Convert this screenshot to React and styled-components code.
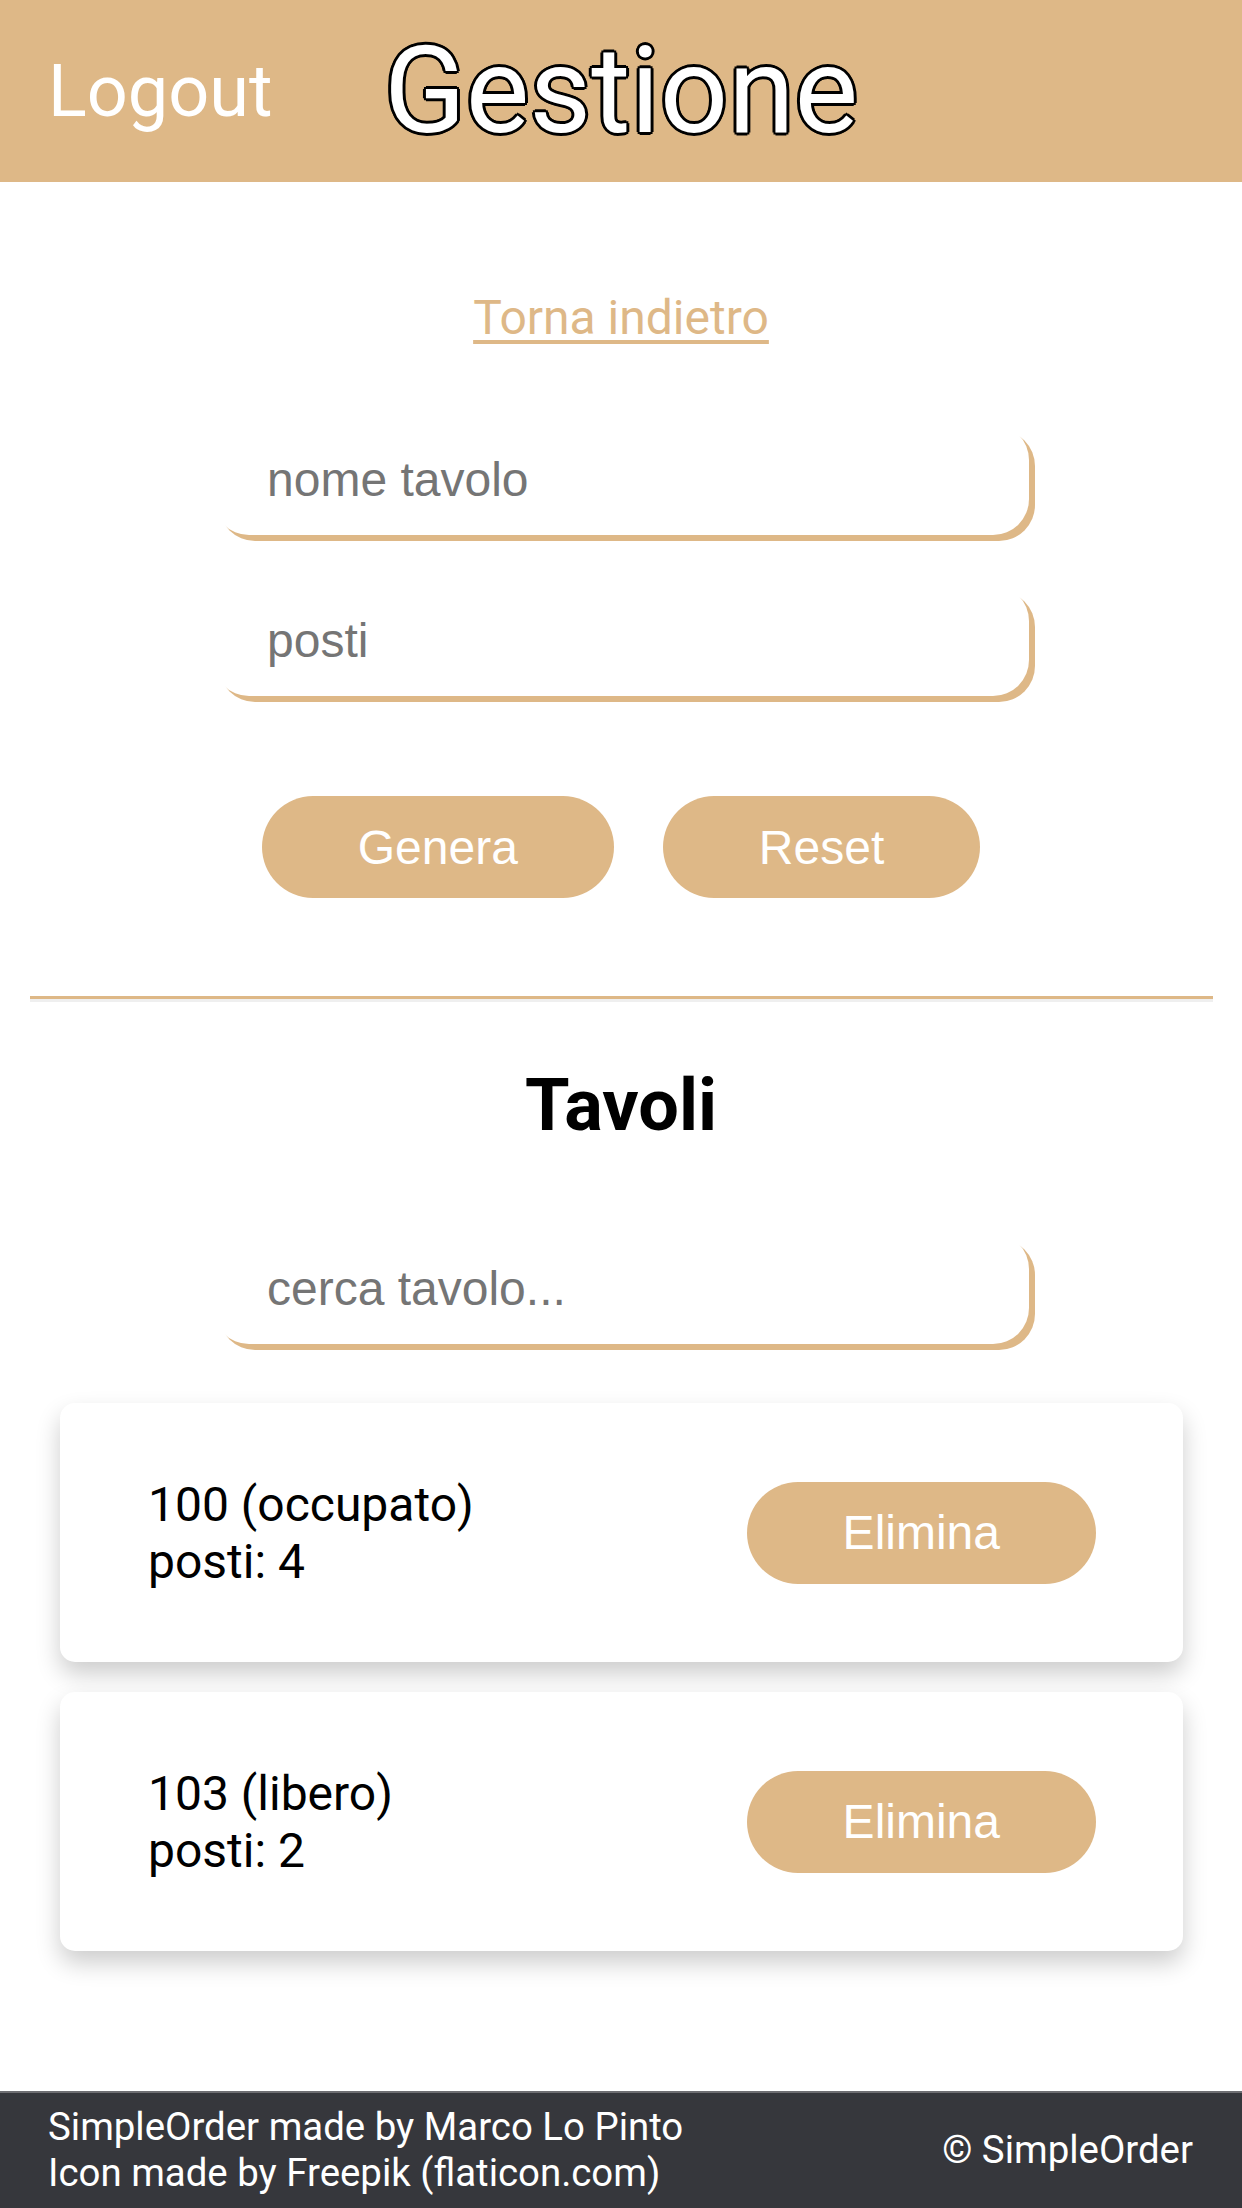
import React from "react";
import styled, { createGlobalStyle } from "styled-components";

const GlobalStyle = createGlobalStyle`
  html, body {
    margin: 0;
    padding: 0;
    background: #ffffff;
    font-family: Roboto, "Liberation Sans", Arial, sans-serif;
  }
  * {
    box-sizing: border-box;
  }
`;

const tables = [
  { id: 100, state: "occupato", seats: 4 },
  { id: 103, state: "libero", seats: 2 },
];

function App() {
  return (
    <>
      <GlobalStyle />
      <Page>
        <Header>
          <Logout>Logout</Logout>
          <Title>Gestione</Title>
          <span />
        </Header>

        <Main>
          <BackLink href="#">Torna indietro</BackLink>

          <Form>
            <Input placeholder="nome tavolo" />
            <Input placeholder="posti" $top={50} />
            <ButtonRow>
              <Button type="button">Genera</Button>
              <Button type="button">Reset</Button>
            </ButtonRow>
          </Form>

          <Divider />

          <Heading>Tavoli</Heading>

          <Input placeholder="cerca tavolo..." $top={85} />

          <List>
            {tables.map((t) => (
              <Card key={t.id}>
                <CardText>
                  {t.id} ({t.state})
                  <br />
                  posti: {t.seats}
                </CardText>
                <Button type="button">Elimina</Button>
              </Card>
            ))}
          </List>
        </Main>

        <Footer>
          <FooterText>
            SimpleOrder made by Marco Lo Pinto
            <br />
            Icon made by Freepik (flaticon.com)
          </FooterText>
          <FooterText>© SimpleOrder</FooterText>
        </Footer>
      </Page>
    </>
  );
}

export default App;

const Page = styled.div`
  min-height: 100vh;
  display: flex;
  flex-direction: column;
`;

const Header = styled.header`
  height: 182px;
  background: #deb887;
  display: grid;
  grid-template-columns: 1fr auto 1fr;
  align-items: center;
  padding: 0 48px;
`;

const Logout = styled.a`
  color: #ffffff;
  font-size: 72px;
  line-height: normal;
`;

const Title = styled.h1`
  margin: 0;
  color: #ffffff;
  font-size: 120px;
  font-weight: 400;
  line-height: normal;
  text-shadow: -3px 0 #000, 3px 0 #000, 0 -3px #000, 0 3px #000,
    -2px -2px #000, 2px -2px #000, -2px 2px #000, 2px 2px #000;
`;

const Main = styled.main`
  display: flex;
  flex-direction: column;
  align-items: center;
  padding-top: 108px;
  padding-bottom: 60px;
`;

const BackLink = styled.a`
  color: #deb887;
  font-size: 48px;
  line-height: 56px;
  text-decoration: underline;
  text-underline-offset: 6px;
`;

const Form = styled.form`
  display: flex;
  flex-direction: column;
  align-items: center;
  width: 100%;
  margin-top: 78px;
`;

const Input = styled.input`
  width: 816px;
  height: 111px;
  margin-top: ${(p) => p.$top || 0}px;
  padding: 0 54px;
  border: none;
  border-radius: 36px;
  background: #ffffff;
  box-shadow: 6px 6px 0 #deb887;
  font-family: "Liberation Sans", Arial, sans-serif;
  font-size: 48px;
  color: #000;
  outline: none;

  &::placeholder {
    color: #757575;
  }
`;

const ButtonRow = styled.div`
  display: flex;
  gap: 49px;
  margin-top: 100px;
`;

const Button = styled.button`
  height: 102px;
  padding: 0 96px;
  border: none;
  border-radius: 51px;
  background: #deb887;
  color: #ffffff;
  font-family: "Liberation Sans", Arial, sans-serif;
  font-size: 48px;
  cursor: pointer;
`;

const Divider = styled.hr`
  align-self: stretch;
  margin: 98px 29px 0 30px;
  height: 0;
  border: none;
  border-top: 3px solid #deb887;
  border-bottom: 3px solid #efefef;
`;

const Heading = styled.h2`
  margin: 61px 0 0;
  font-size: 72px;
  font-weight: 700;
  line-height: normal;
  color: #000;
`;

const List = styled.div`
  align-self: stretch;
  display: flex;
  flex-direction: column;
  gap: 30px;
  margin: 59px 59px 0 60px;
`;

const Card = styled.div`
  height: 259px;
  display: flex;
  align-items: center;
  justify-content: space-between;
  padding: 0 87px 0 88px;
  background: #ffffff;
  border-radius: 15px;
  box-shadow: 0 12px 24px rgba(0, 0, 0, 0.2);
`;

const CardText = styled.div`
  font-size: 48px;
  line-height: 57px;
  color: #000;
`;

const Footer = styled.footer`
  margin-top: auto;
  display: flex;
  align-items: center;
  justify-content: space-between;
  padding: 11px 49px 12px 48px;
  background: #36373c;
  border-top: 2px solid #6e6e72;
`;

const FooterText = styled.div`
  color: #ffffff;
  font-size: 38.4px;
  line-height: 46px;
`;
